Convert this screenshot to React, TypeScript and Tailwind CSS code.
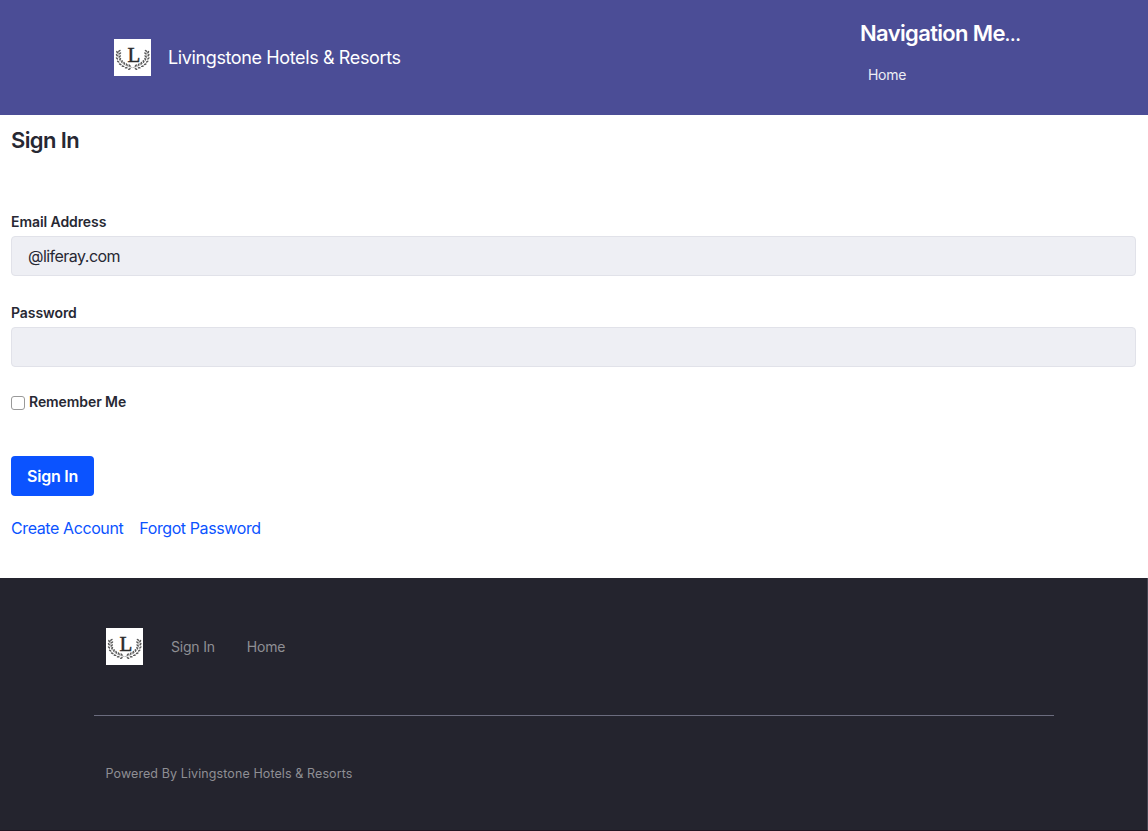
type Leaf = { x: number; y: number; angle: number };

const LEAVES: Leaf[] = [
  { x: 5.4, y: 11.8, angle: -35 },
  { x: 3.2, y: 13.2, angle: 55 },
  { x: 6, y: 14.4, angle: -40 },
  { x: 2.9, y: 16.2, angle: 55 },
  { x: 5.8, y: 17.4, angle: -45 },
  { x: 3, y: 19.4, angle: 45 },
  { x: 6.2, y: 20.2, angle: -60 },
  { x: 4.2, y: 22.6, angle: 35 },
  { x: 8, y: 22.4, angle: -80 },
  { x: 6.2, y: 25.2, angle: 20 },
  { x: 10.2, y: 24.2, angle: 70 },
  { x: 9, y: 27.2, angle: 10 },
  { x: 12.8, y: 25.6, angle: 55 },
  { x: 12.2, y: 28.8, angle: -5 },
  { x: 15.6, y: 26.6, angle: 45 },
  { x: 15.4, y: 30, angle: -25 },
];

function Branch() {
  return (
    <g>
      <path d="M4.6 12.5C3.4 20.5 8.5 27 18.5 28.6" fill="none" stroke="#888" strokeWidth="0.6" />
      {LEAVES.map(({ x, y, angle }) => (
        <ellipse key={`${x}-${y}`} cx={x} cy={y} rx="1.5" ry="0.8" transform={`rotate(${angle} ${x} ${y})`} />
      ))}
    </g>
  );
}

function Logo() {
  return (
    <svg viewBox="0 0 37 37" className="size-[37px] shrink-0 bg-white" fill="#585858" role="img">
      <Branch />
      <g transform="translate(37.4 0) scale(-1 1)">
        <Branch />
      </g>
      <text
        x="19.8"
        y="22.6"
        textAnchor="middle"
        fill="#2b2b2b"
        stroke="#2b2b2b"
        strokeWidth="0.5"
        className="font-['Liberation_Serif',serif] text-[21px]"
      >
        L
      </text>
    </svg>
  );
}

function Field({ label, type, value }: { label: string; type: string; value: string }) {
  return (
    <label className="block text-sm leading-[21px] font-semibold tracking-[-0.08px]">
      {label}
      <input
        type={type}
        defaultValue={value}
        className="mt-1 block h-10 w-full rounded-[4px] border border-[#e1e2e9] bg-[#eeeff4] px-4 text-base font-normal tracking-[-0.53px] outline-none"
      />
    </label>
  );
}

export default function App() {
  return (
    <div className="flex h-[831px] flex-col bg-white font-['Inter',sans-serif] text-[#272833]">
      <header className="flex h-[115px] shrink-0 justify-between bg-[#4b4d96] pl-[114px] text-white">
        <div className="flex items-center gap-[17px]">
          <Logo />
          <span className="text-lg tracking-[-0.38px]">Livingstone Hotels &amp; Resorts</span>
        </div>
        <nav className="w-[288px] pt-[17px]">
          <h2 className="h-[33px] text-[22px] leading-[33px] font-semibold tracking-[-0.65px] whitespace-nowrap">
            Navigation Me<span className="text-[16px] leading-none font-bold">…</span>
          </h2>
          <a href="#" className="mt-[14px] block pl-2 text-sm leading-[21px] tracking-[-0.3px] text-[#ededf4]">
            Home
          </a>
        </nav>
      </header>

      <main className="h-[463px] shrink-0 pt-[9px] pr-3 pl-[11px]">
        <h1 className="text-[22px] leading-[33px] font-semibold tracking-[-0.6px]">Sign In</h1>
        <form className="pt-[54px]">
          <Field label="Email Address" type="text" value="@liferay.com" />
          <div className="mt-[26px]">
            <Field label="Password" type="password" value="" />
          </div>
          <label className="mt-6 flex h-[21px] gap-1 text-sm leading-[21px] font-semibold tracking-[-0.08px]">
            <input
              type="checkbox"
              className="mt-[5px] size-[14px] appearance-none rounded-[3px] border border-[#999] bg-white"
            />
            <span>Remember Me</span>
          </label>
          <button
            type="button"
            className="mt-11 flex h-10 w-[83px] items-center justify-center rounded-[4px] bg-[#0b53ff] font-semibold tracking-[-0.25px] text-white"
          >
            Sign In
          </button>
        </form>
        <div className="mt-5 flex gap-4 leading-6 tracking-[-0.4px] text-[#0b53ff]">
          <a href="#">Create Account</a>
          <a href="#">Forgot Password</a>
        </div>
      </main>

      <footer className="flex-1 border-r border-b border-r-[#454552] border-b-[#211522] bg-[#24242e] pl-[94px] text-[#8f8f94]">
        <div className="flex h-[137px] w-[960px] items-center pl-3 text-sm tracking-[-0.2px]">
          <Logo />
          <a href="#" className="ml-7">
            Sign In
          </a>
          <a href="#" className="ml-8">
            Home
          </a>
        </div>
        <div className="w-[960px] border-t border-[#6b6c7e] pt-12 pl-[11.5px] text-[12.5px] leading-5 tracking-[0.1px]">
          Powered By Livingstone Hotels &amp; Resorts
        </div>
      </footer>
    </div>
  );
}
